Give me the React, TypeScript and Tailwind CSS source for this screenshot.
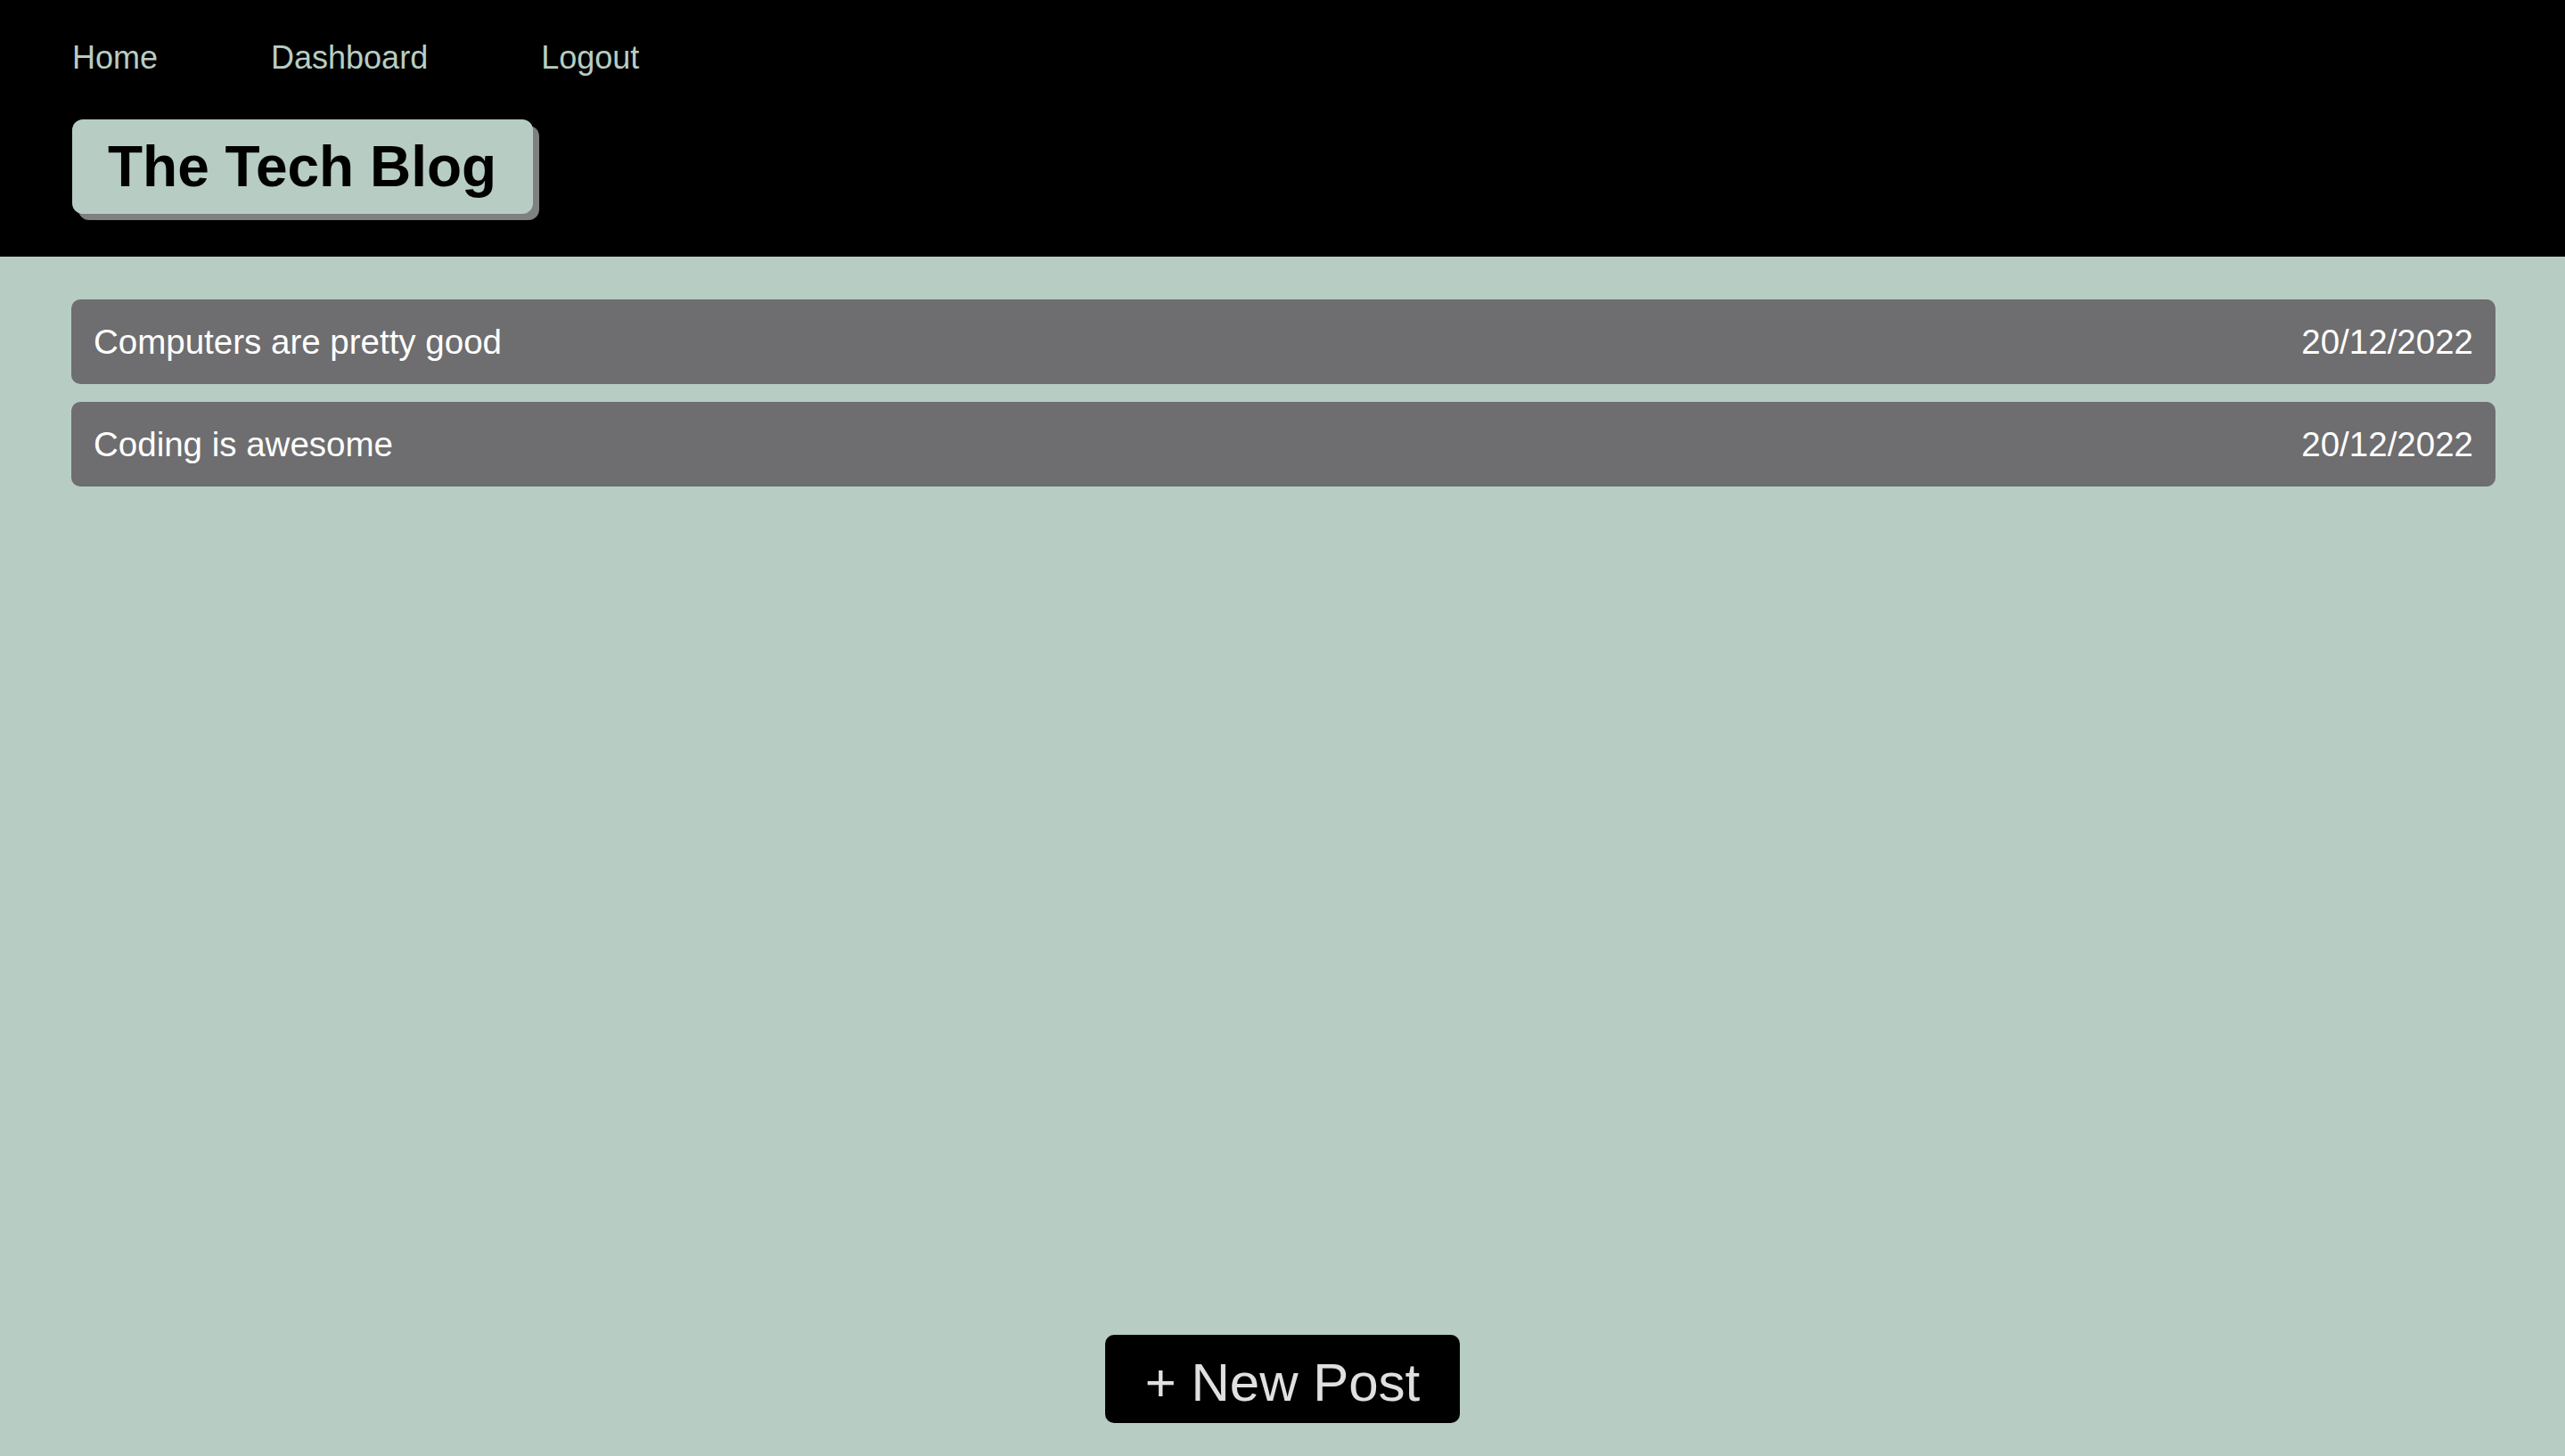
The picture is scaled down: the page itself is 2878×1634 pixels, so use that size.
import React from 'react';

const posts = [
  { title: 'Computers are pretty good', date: '20/12/2022' },
  { title: 'Coding is awesome', date: '20/12/2022' },
];

export default function App() {
  return (
    <div
      className="min-h-screen flex flex-col bg-[#b7cdc3]"
      style={{ fontFamily: '"Liberation Sans", Arial, sans-serif' }}
    >
      {/* header */}
      <header className="bg-black px-[81px] pt-[44px] pb-[48px]">
        <nav className="flex items-center gap-[127px] text-[36px] leading-[41px] text-[#b7cdc3]">
          <a href="#">Home</a>
          <a href="#">Dashboard</a>
          <a href="#">Logout</a>
        </nav>
        <div className="mt-[49px] flex">
          <h1 className="w-[517px] rounded-xl bg-[#b7cdc3] px-10 py-4 text-[64px] leading-[74px] font-bold text-black shadow-[7px_7px_0_#808080]">
            The Tech Blog
          </h1>
        </div>
      </header>

      {/* posts */}
      <main className="flex-1 pl-[80px] pr-[78px] pt-[48px]">
        <div className="flex flex-col gap-[20px]">
          {posts.map((post, index) => (
            <div
              key={index}
              className="flex h-[95px] items-center justify-between rounded-[10px] bg-[#6e6d6f] px-[25px] text-[38.5px] leading-[44px] text-white"
            >
              <span>{post.title}</span>
              <span>{post.date}</span>
            </div>
          ))}
        </div>
      </main>

      {/* new post */}
      <div className="flex justify-center pb-[37px]">
        <button className="flex h-[99px] w-[398px] items-center justify-center rounded-[10px] bg-black pt-2 text-[60px] text-[#e0e0e0]">
          + New Post
        </button>
      </div>
    </div>
  );
}
